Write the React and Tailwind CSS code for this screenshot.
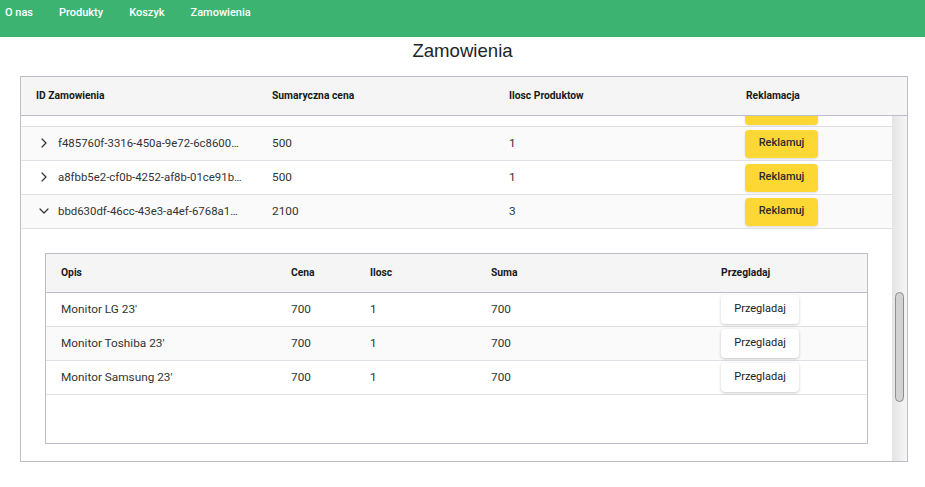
import React from "react";
import { ChevronRight, ChevronDown } from "lucide-react";

const orders = [
  { id: "f485760f-3316-450a-9e72-6c8600012ab4", price: 500, count: 1 },
  { id: "a8fbb5e2-cf0b-4252-af8b-01ce91be3d21", price: 500, count: 1 },
  { id: "bbd630df-46cc-43e3-a4ef-6768a1b90c77", price: 2100, count: 3, open: true },
];

const products = [
  { name: "Monitor LG 23'", price: 700, qty: 1, sum: 700 },
  { name: "Monitor Toshiba 23'", price: 700, qty: 1, sum: 700 },
  { name: "Monitor Samsung 23'", price: 700, qty: 1, sum: 700 },
];

const cols = "grid grid-cols-[236px_237px_237px_1fr]";
const innerCols = "grid grid-cols-[230px_79px_121px_230px_1fr]";

const ReklamujButton = ({ className = "" }) => (
  <button
    className={`h-[28px] w-[73px] -ml-px rounded bg-[#fdd835] font-medium text-[11px] text-[#2b2b2b] shadow-sm ${className}`}
  >
    Reklamuj
  </button>
);

const OrderRow = ({ row, striped }) => (
  <div
    className={`${cols} h-[34px] items-center border-b border-[#e0e0e6] ${
      striped ? "bg-[#fafafa]" : "bg-white"
    }`}
  >
    <div className="flex items-center px-[15px] min-w-0">
      {row.open ? (
        <ChevronDown size={16} strokeWidth={1.8} className="shrink-0 text-[#333]" />
      ) : (
        <ChevronRight size={16} strokeWidth={1.8} className="shrink-0 text-[#333]" />
      )}
      <span className="ml-[6px] truncate text-[11.4px]">{row.id}</span>
    </div>
    <div className="px-[15px]">{row.price}</div>
    <div className="px-[15px]">{row.count}</div>
    <div className="px-[15px]">
      <ReklamujButton />
    </div>
  </div>
);

const Details = () => (
  <div className="p-6">
    <div className="border border-[#bdbdc8] bg-white">
      <div className={`${innerCols} h-[39px] items-center bg-[#f5f5f5] border-b border-[#bdbdc8] font-bold text-[10.3px] text-[#1a1a1a]`}>
        <div className="px-[15px]">Opis</div>
        <div className="px-[15px]">Cena</div>
        <div className="px-[15px]">Ilosc</div>
        <div className="px-[15px]">Suma</div>
        <div className="px-[15px]">Przegladaj</div>
      </div>
      {products.map((p, i) => (
        <div
          key={p.name}
          className={`${innerCols} h-[34px] items-center border-b border-[#e0e0e6] ${
            i % 2 === 1 ? "bg-[#fafafa]" : "bg-white"
          }`}
        >
          <div className="px-[15px]">{p.name}</div>
          <div className="px-[15px]">{p.price}</div>
          <div className="px-[15px]">{p.qty}</div>
          <div className="px-[15px]">{p.sum}</div>
          <div className="px-[15px]">
            <button className="h-[29px] w-[78px] rounded bg-white text-[11px] text-[#212121] shadow-[0_1px_3px_rgba(0,0,0,0.22)]">
              Przegladaj
            </button>
          </div>
        </div>
      ))}
      <div className="h-[48px]" />
    </div>
  </div>
);

export default function App() {
  return (
    <div className="min-h-screen bg-white font-['Roboto',sans-serif] text-[11.8px] text-[#333]">
      <nav className="h-[37px] bg-[#3cb371] flex items-start gap-[26px] pl-[5px] pt-[5px]">
        {["O nas", "Produkty", "Koszyk", "Zamowienia"].map((l) => (
          <a key={l} href="#" className="text-white text-[11px] font-medium">
            {l}
          </a>
        ))}
      </nav>

      <h1 className="text-center font-['Liberation_Sans',sans-serif] text-[18.6px] leading-[24px] text-[#212529] mt-[2px] mb-[13px]">
        Zamowienia
      </h1>

      <div className="ml-5 w-[888px] border border-[#bdbdc8] flex flex-col">
        <div className={`${cols} h-[39px] items-center bg-[#f5f5f5] border-b border-[#bdbdc8] font-bold text-[10.3px] text-[#1a1a1a]`}>
          <div className="px-[15px]">ID Zamowienia</div>
          <div className="px-[15px]">Sumaryczna cena</div>
          <div className="px-[15px]">Ilosc Produktow</div>
          <div className="px-[15px]">Reklamacja</div>
        </div>

        <div className="h-[345px] flex">
          {/* rows, already scrolled down */}
          <div className="flex-1 min-w-0 overflow-hidden">
            <div className={`${cols} h-[11px] overflow-hidden border-b border-[#e0e0e6] bg-white`}>
              <div />
              <div />
              <div />
              <div className="px-[15px] h-[10px] overflow-hidden">
                <ReklamujButton className="-mt-[19px] block" />
              </div>
            </div>
            {orders.map((r, i) => (
              <React.Fragment key={r.id}>
                <OrderRow row={r} striped={i % 2 === 0} />
                {r.open && <Details />}
              </React.Fragment>
            ))}
          </div>

          {/* scrollbar */}
          <div className="w-[15px] shrink-0 flex flex-col items-center bg-gradient-to-r from-[#e4e4e4] to-[#f6f6f6]">
            <div className="h-[176px]" />
            <div className="h-[110px] w-[9px] rounded-full bg-[#d2d2d2] border border-[#8e8e8e]" />
          </div>
        </div>
      </div>
    </div>
  );
}
